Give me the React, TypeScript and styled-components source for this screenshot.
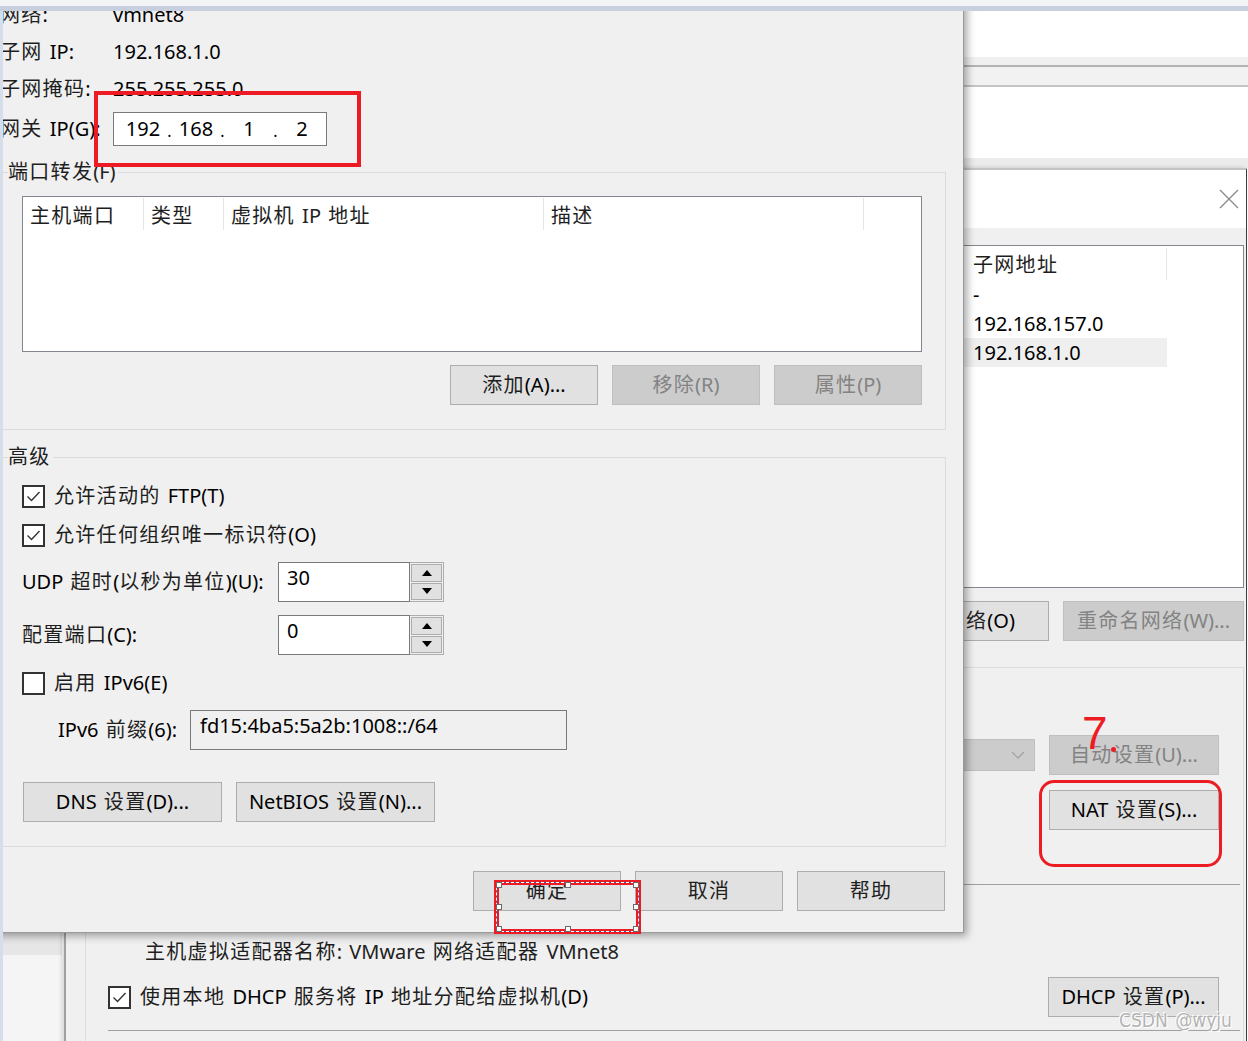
import React from 'react'
import styled, { createGlobalStyle } from 'styled-components'

const GlobalStyle = createGlobalStyle`
  html, body {
    margin: 0;
    padding: 0;
    background: #f0f0f0;
  }
  body {
    font-family: 'Noto Sans', 'Noto Sans CJK SC', sans-serif;
    font-size: 20px;
    line-height: 24px;
    word-spacing: 2px;
    color: #000;
  }
  * {
    box-sizing: border-box;
  }
`

// Han characters of the UI font run a little wider than Noto's, so pad them
const hanRun = /([\u2e80-\u9fff\uff00-\uffef]+)/

const T: React.FC<{ children: string }> = ({ children }) => (
  <>
    {children
      .split(hanRun)
      .map((part, i) => (i % 2 === 1 ? <Han key={i}>{part}</Han> : part))}
  </>
)

interface CheckProps {
  checked?: boolean
}

const CheckBox: React.FC<CheckProps> = ({ checked }) => (
  <Box>
    {checked && (
      <svg width='17' height='17' viewBox='0 0 17 17'>
        <polyline
          points='2.5,8.5 6.5,12.5 14.5,4'
          fill='none'
          stroke='#333'
          strokeWidth='1.4'
        />
      </svg>
    )}
  </Box>
)

const Arrow: React.FC<{ up?: boolean }> = ({ up }) => (
  <svg width='10' height='6' viewBox='0 0 10 6'>
    <polygon points={up ? '0,6 10,6 5,0' : '0,0 10,0 5,6'} fill='#000' />
  </svg>
)

const SpinInput: React.FC<{ value: string }> = ({ value }) => (
  <Spin>
    <SpinField>{value}</SpinField>
    <SpinButtons>
      <SpinBtn>
        <Arrow up />
      </SpinBtn>
      <SpinBtn>
        <Arrow />
      </SpinBtn>
    </SpinButtons>
  </Spin>
)

const handles = [
  [0, 0],
  [50, 0],
  [100, 0],
  [0, 50],
  [100, 50],
  [0, 100],
  [50, 100],
  [100, 100]
]

const subnets = [
  { addr: '-', selected: false },
  { addr: '192.168.157.0', selected: false },
  { addr: '192.168.1.0', selected: true }
]

const App: React.FC = () => {
  return (
    <>
      <GlobalStyle />
      <Desktop>
        <TopBar />
        <Main>
          <LeftFrame />
          <Stage>
            <ParentWindow>
              <Toolbar />
              <TabBar>
                <Tabs />
              </TabBar>
              <Pane />
              <PaneFooter />
              <Workspace>
                <Sidebar>
                  <SidebarHead />
                  <SidebarBody />
                </Sidebar>
                <WorkArea />
              </Workspace>
            </ParentWindow>

            <Editor>
              <EditorTitle>
                <CloseBtn>
                  <svg width='20' height='20' viewBox='0 0 20 20'>
                    <path
                      d='M1 1 L19 19 M19 1 L1 19'
                      stroke='#8a8a8a'
                      strokeWidth='1.3'
                    />
                  </svg>
                </CloseBtn>
              </EditorTitle>
              <EditorBody>
                <NetList>
                  <NetHeader>
                    <NetSpacer />
                    <NetHeadCell>
                      <T>子网地址</T>
                    </NetHeadCell>
                  </NetHeader>
                  {subnets.map(s => (
                    <NetRow key={s.addr} $selected={s.selected}>
                      <NetSpacer />
                      <NetCell>{s.addr}</NetCell>
                    </NetRow>
                  ))}
                </NetList>
                <RightRow $mt={13} $gap={14}>
                  <Btn $w={181}>
                    <T>移除网络(O)</T>
                  </Btn>
                  <Btn $w={181} disabled>
                    <T>重命名网络(W)...</T>
                  </Btn>
                </RightRow>
                <InfoGroup>
                  <RightRow $mt={0} $gap={14}>
                    <Dropdown>
                      <svg width='14' height='8' viewBox='0 0 14 8'>
                        <polyline
                          points='1,1 7,7 13,1'
                          fill='none'
                          stroke='#a0a0a0'
                          strokeWidth='1.2'
                        />
                      </svg>
                    </Dropdown>
                    <Btn $w={170} disabled>
                      <T>自动设置(U)...</T>
                    </Btn>
                  </RightRow>
                  <RightRow $mt={15} $gap={14}>
                    <Btn $w={170}>
                      <T>NAT 设置(S)...</T>
                    </Btn>
                  </RightRow>
                  <Rule $mt={54} />
                  <AdapterName>
                    <T>主机虚拟适配器名称: VMware 网络适配器 VMnet8</T>
                  </AdapterName>
                  <DhcpRow>
                    <CheckRow $mt={0}>
                      <CheckBox checked />
                      <span>
                        <T>使用本地 DHCP 服务将 IP 地址分配给虚拟机(D)</T>
                      </span>
                    </CheckRow>
                    <Btn $w={171}>
                      <T>DHCP 设置(P)...</T>
                    </Btn>
                  </DhcpRow>
                  <Rule $mt={13} />
                </InfoGroup>
              </EditorBody>
            </Editor>

            <Dialog>
              <InfoGrid>
                <span>
                  <T>网络:</T>
                </span>
                <span>vmnet8</span>
                <span>
                  <T>子网 IP:</T>
                </span>
                <span>192.168.1.0</span>
                <span>
                  <T>子网掩码:</T>
                </span>
                <span>255.255.255.0</span>
                <span>
                  <T>网关 IP(G):</T>
                </span>
                <IpInput>
                  <IpPart>192</IpPart>
                  <IpDot>.</IpDot>
                  <IpPart>168</IpPart>
                  <IpDot>.</IpDot>
                  <IpPart>1</IpPart>
                  <IpDot>.</IpDot>
                  <IpPart>2</IpPart>
                </IpInput>
              </InfoGrid>

              <Group $mt={9}>
                <Legend>
                  <T>端口转发(F)</T>
                </Legend>
                <GroupBody>
                  <PortList>
                    <PortHeader>
                      <PortCol $w={121}>
                        <T>主机端口</T>
                      </PortCol>
                      <PortCol $w={80}>
                        <T>类型</T>
                      </PortCol>
                      <PortCol $w={320}>
                        <T>虚拟机 IP 地址</T>
                      </PortCol>
                      <PortCol $w={320}>
                        <T>描述</T>
                      </PortCol>
                    </PortHeader>
                  </PortList>
                  <RightRow $mt={13} $gap={14}>
                    <Btn $w={148}>
                      <T>添加(A)...</T>
                    </Btn>
                    <Btn $w={148} disabled>
                      <T>移除(R)</T>
                    </Btn>
                    <Btn $w={148} disabled>
                      <T>属性(P)</T>
                    </Btn>
                  </RightRow>
                </GroupBody>
              </Group>

              <Group $mt={15}>
                <Legend>
                  <T>高级</T>
                </Legend>
                <GroupBody>
                  <CheckRow $mt={0}>
                    <CheckBox checked />
                    <span>
                      <T>允许活动的 FTP(T)</T>
                    </span>
                  </CheckRow>
                  <CheckRow $mt={9}>
                    <CheckBox checked />
                    <span>
                      <T>允许任何组织唯一标识符(O)</T>
                    </span>
                  </CheckRow>
                  <FieldRow $mt={12} $label={256}>
                    <span>
                      <T>UDP 超时(以秒为单位)(U):</T>
                    </span>
                    <SpinInput value='30' />
                  </FieldRow>
                  <FieldRow $mt={13} $label={256}>
                    <span>
                      <T>配置端口(C):</T>
                    </span>
                    <SpinInput value='0' />
                  </FieldRow>
                  <CheckRow $mt={13}>
                    <CheckBox />
                    <span>
                      <T>启用 IPv6(E)</T>
                    </span>
                  </CheckRow>
                  <FieldRow $mt={12} $label={132} $indent={36}>
                    <span>
                      <T>IPv6 前缀(6):</T>
                    </span>
                    <PrefixInput>fd15:4ba5:5a2b:1008::/64</PrefixInput>
                  </FieldRow>
                  <LeftRow $mt={32}>
                    <Btn $w={199}>
                      <T>DNS 设置(D)...</T>
                    </Btn>
                    <Btn $w={199}>
                      <T>NetBIOS 设置(N)...</T>
                    </Btn>
                  </LeftRow>
                </GroupBody>
              </Group>

              <Footer>
                <Btn $w={148}>
                  <T>确定</T>
                </Btn>
                <Btn $w={148}>
                  <T>取消</T>
                </Btn>
                <Btn $w={148}>
                  <T>帮助</T>
                </Btn>
              </Footer>
            </Dialog>
          </Stage>
        </Main>

        <MarkRect />
        <MarkRound />
        <MarkDigit>7</MarkDigit>
        <MarkDot />
        <Selection>
          {handles.map(([x, y]) => (
            <Handle key={`${x}-${y}`} style={{ left: `${x}%`, top: `${y}%` }} />
          ))}
        </Selection>
        <Watermark>CSDN @wyju</Watermark>
      </Desktop>
    </>
  )
}

const Han = styled.span`
  letter-spacing: 1.3px;
  color: #1e1e1e;
`

const Desktop = styled.div`
  position: relative;
  width: 1248px;
  height: 1041px;
  overflow: hidden;
  display: flex;
  flex-direction: column;
`

const TopBar = styled.div`
  height: 11px;
  flex: none;
  background: linear-gradient(#f3f4f6 0 6px, #c8d0e0 6px 11px);
`

const Main = styled.div`
  flex: 1;
  display: flex;
  min-height: 0;
`

const LeftFrame = styled.div`
  width: 3px;
  flex: none;
  background: #d6deec;
`

const Stage = styled.div`
  flex: 1;
  position: relative;
  overflow: hidden;
`

/* window behind everything */
const ParentWindow = styled.div`
  position: absolute;
  inset: 0;
  display: flex;
  flex-direction: column;
  background: #fff;
`

const Toolbar = styled.div`
  height: 46px;
  background: #fff;
`

const TabBar = styled.div`
  height: 30px;
  padding-top: 8px;
  background: #f0f0f0;
`

const Tabs = styled.div`
  height: 22px;
  background: #f2f2f2;
  border-top: 2px solid #b4b4b4;
  border-bottom: 2px solid #c4c4c4;
`

const Pane = styled.div`
  height: 71px;
  background: #fff;
`

const PaneFooter = styled.div`
  height: 10px;
  background: #ececec;
`

const Workspace = styled.div`
  flex: 1;
  display: flex;
`

const Sidebar = styled.div`
  width: 59px;
  display: flex;
  flex-direction: column;
`

const SidebarHead = styled.div`
  height: 787px;
  background: #e6e6e6;
`

const SidebarBody = styled.div`
  flex: 1;
  background: #f5f5f5;
`

const WorkArea = styled.div`
  flex: 1;
  background: #fff;
`

/* virtual network editor */
const Editor = styled.div`
  position: absolute;
  left: 61px;
  top: 157px;
  width: 1183px;
  bottom: -60px;
  display: flex;
  flex-direction: column;
  background: #f0f0f0;
  border-left: 2px solid #a0a0a0;
  border-top: 2px solid #c4c4c4;
  border-right: 1px solid #3c3c3c;
  box-shadow: -2px 0 4px rgba(0, 0, 0, 0.18);
`

const EditorTitle = styled.div`
  height: 58px;
  flex: none;
  background: #fff;
  display: flex;
  justify-content: flex-end;
  align-items: center;
`

const CloseBtn = styled.div`
  width: 34px;
  height: 30px;
  display: flex;
  align-items: center;
  justify-content: center;
`

const EditorBody = styled.div`
  flex: 1;
  display: flex;
  flex-direction: column;
  padding: 17px 2px 0 19px;
`

const NetList = styled.div`
  height: 343px;
  background: #fff;
  border: 1px solid #828790;
`

const NetHeader = styled.div`
  display: flex;
  height: 34px;
`

const NetSpacer = styled.div`
  width: 879px;
  flex: none;
`

const NetHeadCell = styled.div`
  width: 202px;
  height: 32px;
  margin-top: 2px;
  padding: 5px 0 0 8px;
  border-right: 1px solid #e5e5e5;
  color: #222;
`

const NetRow = styled.div<{ $selected: boolean }>`
  display: flex;
  width: 1081px;
  height: 29px;
  align-items: center;
  background: ${p => (p.$selected ? '#efefef' : 'transparent')};
`

const NetCell = styled.div`
  padding-left: 8px;
`

const RightRow = styled.div<{ $mt: number; $gap: number }>`
  display: flex;
  justify-content: flex-end;
  align-items: center;
  gap: ${p => p.$gap}px;
  margin-top: ${p => p.$mt}px;
`

const LeftRow = styled.div<{ $mt: number }>`
  display: flex;
  gap: 14px;
  margin-top: ${p => p.$mt}px;
  margin-left: 1px;
`

const InfoGroup = styled.div`
  margin-top: 26px;
  flex: 1;
  border: 1px solid #dcdcdc;
  padding: 67px 24px 0 22px;
`

const Dropdown = styled.div`
  width: 300px;
  height: 32px;
  background: #cccccc;
  border: 1px solid #bfbfbf;
  display: flex;
  justify-content: flex-end;
  align-items: center;
  padding-right: 9px;
`

const Rule = styled.div<{ $mt: number }>`
  height: 1px;
  margin: ${p => p.$mt}px -21px 0 0;
  background: #a0a0a0;
`

const AdapterName = styled.div`
  margin: 55px 0 0 37px;
  color: #222;
`

const DhcpRow = styled.div`
  display: flex;
  justify-content: space-between;
  align-items: center;
  height: 40px;
  margin-top: 13px;
`

/* NAT settings dialog */
const Dialog = styled.div`
  position: absolute;
  left: -10px;
  top: -15px;
  width: 971px;
  background: #f0f0f0;
  border-right: 1px solid #9a9a9a;
  border-bottom: 1px solid #9a9a9a;
  box-shadow: 3px 3px 8px rgba(0, 0, 0, 0.35);
  padding: 0 17px 21px 7px;
`

const InfoGrid = styled.div`
  display: grid;
  grid-template-columns: 113px 1fr;
  grid-template-rows: 37px 37px 37px 44px;
  align-items: center;
`

const IpInput = styled.div`
  width: 214px;
  height: 34px;
  display: flex;
  align-items: center;
  padding-left: 7px;
  background: #fff;
  border: 1px solid #7a7a7a;
`

const IpPart = styled.span`
  width: 44px;
  text-align: center;
`

const IpDot = styled.span`
  width: 9px;
  text-align: center;
  font-size: 16px;
  padding-top: 3px;
`

const Group = styled.fieldset<{ $mt: number }>`
  margin: ${p => p.$mt}px 0 0 -2px;
  min-width: 0;
  border: 1px solid #dcdcdc;
  padding: 12px 23px 24px 9px;
`

const Legend = styled.legend`
  padding: 0 2px 0 0;
  line-height: 24px;
  color: #222;
`

const GroupBody = styled.div`
  padding-left: 14px;
`

const PortList = styled.div`
  height: 156px;
  background: #fff;
  border: 1px solid #828790;
`

const PortHeader = styled.div`
  display: flex;
  height: 35px;
`

const PortCol = styled.div<{ $w: number }>`
  width: ${p => p.$w}px;
  height: 32px;
  margin-top: 1px;
  padding: 6px 0 0 7px;
  border-right: 1px solid #e5e5e5;
  color: #222;
`

const Btn = styled.button<{ $w: number }>`
  width: ${p => p.$w}px;
  height: 40px;
  flex: none;
  padding: 0;
  font: inherit;
  word-spacing: inherit;
  color: #000;
  background: #e1e1e1;
  border: 1px solid #adadad;

  &:disabled {
    background: #cccccc;
    border-color: #bfbfbf;
    color: #838383;
  }
  &:disabled ${Han} {
    color: #838383;
  }
`

const CheckRow = styled.label<{ $mt: number }>`
  display: flex;
  align-items: center;
  gap: 9px;
  height: 30px;
  margin-top: ${p => p.$mt}px;
`

const Box = styled.span`
  width: 23px;
  height: 23px;
  flex: none;
  display: inline-flex;
  align-items: center;
  justify-content: center;
  background: #fff;
  border: 2px solid #333;
`

const FieldRow = styled.div<{ $mt: number; $label: number; $indent?: number }>`
  display: grid;
  grid-template-columns: ${p => p.$label}px auto;
  justify-content: start;
  align-items: center;
  height: 40px;
  margin-top: ${p => p.$mt}px;
  padding-left: ${p => p.$indent ?? 0}px;
`

const Spin = styled.div`
  display: flex;
  width: 166px;
  height: 40px;
`

const SpinField = styled.div`
  flex: 1;
  padding: 3px 8px;
  background: #fff;
  border: 1px solid #7a7a7a;
`

const SpinButtons = styled.div`
  width: 34px;
  display: flex;
  flex-direction: column;
  gap: 1px;
  padding: 1px;
  background: #f0f0f0;
  border: 1px solid #adadad;
  border-left: none;
`

const SpinBtn = styled.div`
  flex: 1;
  display: flex;
  align-items: center;
  justify-content: center;
  background: #e1e1e1;
  border: 1px solid #adadad;
`

const PrefixInput = styled.div`
  width: 377px;
  height: 40px;
  padding: 3px 9px;
  background: #f0f0f0;
  border: 1px solid #7a7a7a;
`

const Footer = styled.div`
  display: flex;
  justify-content: flex-end;
  gap: 14px;
  margin-top: 24px;
  padding-right: 1px;
`

/* red markup drawn over the screenshot */
const MarkRect = styled.div`
  position: absolute;
  left: 94px;
  top: 91px;
  width: 267px;
  height: 76px;
  border: 4px solid #ed1c24;
`

const MarkRound = styled.div`
  position: absolute;
  left: 1039px;
  top: 780px;
  width: 183px;
  height: 87px;
  border: 3px solid #ed1c24;
  border-radius: 15px;
`

const MarkDigit = styled.div`
  position: absolute;
  left: 1082px;
  top: 708px;
  font-family: 'Liberation Sans', sans-serif;
  font-size: 46px;
  line-height: 50px;
  color: #ed1c24;
`

const MarkDot = styled.div`
  position: absolute;
  left: 1111px;
  top: 747px;
  width: 5px;
  height: 5px;
  border-radius: 50%;
  background: #ed1c24;
`

const Selection = styled.div`
  position: absolute;
  left: 494px;
  top: 880px;
  width: 147px;
  height: 54px;
  border: 5px solid #ed1c24;

  &::before,
  &::after {
    content: '';
    position: absolute;
    inset: -3px;
  }
  &::before {
    border: 1px solid #3a5ba8;
  }
  &::after {
    border: 1px dashed #fff;
  }
`

const Handle = styled.span`
  position: absolute;
  width: 6px;
  height: 6px;
  margin: -3px 0 0 -3px;
  background: #fff;
  border: 1px solid #6a6a6a;
  z-index: 1;
`

const Watermark = styled.div`
  position: absolute;
  left: 1119px;
  top: 1008px;
  font-family: 'DejaVu Sans Condensed', 'Liberation Sans', sans-serif;
  font-size: 19px;
  color: #b4b4b4;
  text-shadow: 1px 1px 0 #fff, -1px -1px 0 #fff;
`

export default App
